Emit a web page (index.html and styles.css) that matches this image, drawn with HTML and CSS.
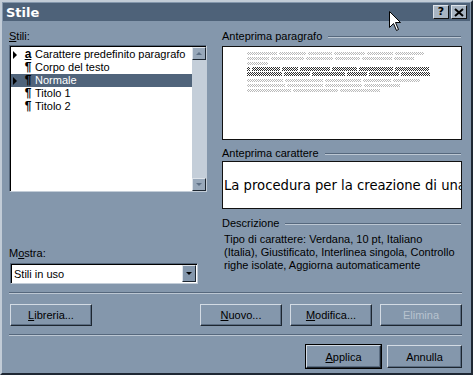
FILE: index.html
```html
<!DOCTYPE html>
<html>
<head>
    <title>Stile</title>
    <link rel="stylesheet" href="styles.css">
</head>
<body>
    <div class="window">
        <div class="titlebar">
            <span class="title">Stile</span>
            <div class="caption-buttons">
                <span class="cap-btn help">?</span>
                <span class="cap-btn">
                    <svg width="10" height="9" viewBox="0 0 10 9"><path d="M1 1 L9 8 M9 1 L1 8" stroke="#000" stroke-width="2"/></svg>
                </span>
            </div>
        </div>

        <div class="content">
            <div class="top">
                <div class="left">
                    <div class="label"><u>S</u>tili:</div>
                    <div class="listbox">
                        <div class="rows">
                            <div class="row"><span class="marker"></span><span class="glyph char">a</span>Carattere predefinito paragrafo</div>
                            <div class="row"><span class="marker none"></span><span class="glyph">¶</span>Corpo del testo</div>
                            <div class="row selected"><span class="marker"></span><span class="glyph">¶</span>Normale</div>
                            <div class="row"><span class="marker none"></span><span class="glyph">¶</span>Titolo 1</div>
                            <div class="row"><span class="marker none"></span><span class="glyph">¶</span>Titolo 2</div>
                        </div>
                        <div class="scrollbar">
                            <span class="sb-btn"><span class="arrow-up"></span></span>
                            <span class="sb-btn"><span class="arrow-down"></span></span>
                        </div>
                    </div>

                    <div class="label mostra">M<u>o</u>stra:</div>
                    <div class="select">
                        <span class="select-value">Stili in uso</span>
                        <span class="drop-btn"><span class="arrow-down dark"></span></span>
                    </div>
                </div>

                <div class="right">
                    <div class="group-title"><span>Anteprima paragrafo</span><i></i></div>
                    <div class="preview para">
                        <div class="pline light">
                            <b style="width:30px"></b><b style="width:27px"></b><b style="width:24px"></b><b style="width:31px"></b><b style="width:26px"></b><b style="width:29px"></b>
                        </div>
                        <div class="pline light">
                            <b style="width:22px"></b><b style="width:33px"></b><b style="width:27px"></b><b style="width:25px"></b><b style="width:30px"></b><b style="width:20px"></b>
                        </div>
                        <div class="pline light">
                            <b style="width:21px"></b>
                        </div>
                        <div class="pline dark first">
                            <b style="width:3px"></b><b style="width:28px"></b><b style="width:16px"></b><b style="width:30px"></b><b style="width:25px"></b><b style="width:34px"></b><b style="width:34px"></b>
                        </div>
                        <div class="pline dark">
                            <b style="width:35px"></b><b style="width:26px"></b><b style="width:33px"></b><b style="width:20px"></b><b style="width:30px"></b><b style="width:29px"></b>
                        </div>
                        <div class="pline light after">
                            <b style="width:36px"></b><b style="width:38px"></b><b style="width:36px"></b><b style="width:28px"></b><b style="width:27px"></b>
                        </div>
                        <div class="pline light">
                            <b style="width:38px"></b><b style="width:36px"></b><b style="width:37px"></b><b style="width:36px"></b>
                        </div>
                        <div class="pline light">
                            <b style="width:44px"></b><b style="width:45px"></b><b style="width:40px"></b>
                        </div>
                    </div>

                    <div class="group-title gap"><span>Anteprima carattere</span><i></i></div>
                    <div class="preview chars">
                        <span class="sample">La procedura per la creazione di una</span>
                    </div>

                    <div class="group-title desc-gap"><span>Descrizione</span><i></i></div>
                    <p class="description">
                        Tipo di carattere: Verdana, 10 pt, Italiano<br>
                        (Italia), Giustificato, Interlinea singola, Controllo<br>
                        righe isolate, Aggiorna automaticamente
                    </p>
                </div>
            </div>

            <div class="separator"></div>

            <div class="actions">
                <button class="btn"><u>L</u>ibreria...</button>
                <button class="btn push"><u>N</u>uovo...</button>
                <button class="btn"><u>M</u>odifica...</button>
                <button class="btn" disabled>Elimina</button>
            </div>

            <div class="separator"></div>

            <div class="footer">
                <button class="btn small default"><u>A</u>pplica</button>
                <button class="btn small">Annulla</button>
            </div>
        </div>

        <!-- mouse pointer -->
        <svg class="cursor" width="13" height="21" viewBox="0 0 13 21">
            <path d="M0.5 0.5 L0.5 16.5 L4.5 12.5 L7.5 19.5 L9.5 18.5 L6.5 11.5 L11.5 11.5 Z" fill="#fff" stroke="#000" stroke-width="1"/>
        </svg>
    </div>
</body>
</html>
```

FILE: styles.css
```css
/* Finestra di dialogo classica, tema grigio-blu */
body {
    margin: 0;
    font-family: 'Liberation Sans', Arial, sans-serif;
    font-size: 11px;
    color: #000;
}
.window {
    position: relative;
    width: 473px;
    height: 375px;
    box-sizing: border-box;
    background-color: #8497ac;
    border: 2px solid;
    border-color: #c2ccd7 #1f2833 #1f2833 #c2ccd7;
    display: flex;
    flex-direction: column;
}
.titlebar {
    height: 18px;
    margin: 1px 1px 0 1px;
    background-color: #4e6279;
    display: flex;
    align-items: center;
    justify-content: space-between;
    padding: 0 3px 0 3px;
}
.title {
    font-family: 'DejaVu Sans', sans-serif;
    font-weight: bold;
    font-size: 13px;
    color: #fff;
}
.caption-buttons {
    display: flex;
    gap: 2px;
}
.cap-btn {
    width: 14px;
    height: 12px;
    background-color: #a8b5c3;
    border: 1px solid;
    border-color: #dde3ea #111 #111 #dde3ea;
    display: flex;
    align-items: center;
    justify-content: center;
}
.cap-btn.help {
    font-family: 'DejaVu Sans', sans-serif;
    font-weight: bold;
    font-size: 11px;
    line-height: 12px;
}
.content {
    flex: 1;
    padding: 9px 9px 0 7px;
    display: flex;
    flex-direction: column;
}
.top {
    height: 254px;
    display: flex;
    gap: 15px;
}
.left {
    width: 198px;
    display: flex;
    flex-direction: column;
}
.label {
    height: 13px;
    line-height: 13px;
    margin-bottom: 2px;
}
.label.mostra {
    margin-top: auto;
    margin-bottom: 3px;
}

/* lista stili */
.listbox {
    height: 147px;
    box-sizing: border-box;
    background-color: #fff;
    border: 1px solid;
    border-color: #55677c #c3cdd8 #c3cdd8 #55677c;
    box-shadow: inset 1px 1px 0 #000;
    padding: 1px 0 0 1px;
    display: flex;
}
.rows {
    flex: 1;
    padding-top: 1px;
}
.row {
    height: 13px;
    line-height: 13px;
    display: flex;
    align-items: center;
    white-space: nowrap;
}
.row.selected {
    background-color: #50647b;
    color: #fff;
}
.marker {
    width: 0;
    height: 0;
    margin: 0 5px 0 2px;
    border-left: 4px solid #000;
    border-top: 4px solid transparent;
    border-bottom: 4px solid transparent;
}
.marker.none {
    border-left-color: transparent;
}
.glyph {
    width: 12px;
    margin-right: 1px;
    text-align: center;
    font-weight: bold;
    font-size: 12px;
}
.row.selected .glyph {
    color: #000;
}
.glyph.char {
    text-decoration: underline;
}
.scrollbar {
    width: 14px;
    background-color: #c4ced9;
    display: flex;
    flex-direction: column;
    justify-content: space-between;
}
.sb-btn {
    height: 11px;
    background-color: #98a8ba;
    border: 1px solid;
    border-color: #dde3ea #1d2630 #1d2630 #dde3ea;
    display: flex;
    align-items: center;
    justify-content: center;
}
.arrow-up, .arrow-down {
    width: 0;
    height: 0;
    border-left: 3px solid transparent;
    border-right: 3px solid transparent;
}
.arrow-up {
    border-bottom: 3px solid #5d6f84;
}
.arrow-down {
    border-top: 3px solid #5d6f84;
}
.arrow-down.dark {
    border-top-color: #000;
}

/* casella a discesa */
.select {
    width: 188px;
    height: 21px;
    box-sizing: border-box;
    margin-left: 1px;
    background-color: #fff;
    border: 1px solid;
    border-color: #55677c #c3cdd8 #c3cdd8 #55677c;
    box-shadow: inset 1px 1px 0 #000;
    padding: 1px 1px 1px 3px;
    display: flex;
    align-items: center;
}
.select-value {
    flex: 1;
}
.drop-btn {
    width: 12px;
    height: 15px;
    background-color: #8497ac;
    border: 1px solid;
    border-color: #dde3ea #1d2630 #1d2630 #dde3ea;
    display: flex;
    align-items: center;
    justify-content: center;
}

/* colonna destra */
.right {
    width: 240px;
    display: flex;
    flex-direction: column;
}
.group-title {
    height: 13px;
    line-height: 13px;
    display: flex;
    align-items: center;
    gap: 6px;
}
.group-title i {
    flex: 1;
    height: 1px;
    background-color: #56687d;
    border-bottom: 1px solid #bcc7d3;
    margin-right: 1px;
}
.group-title.gap {
    margin-top: 7px;
}
.group-title.desc-gap {
    margin-top: 8px;
}
.preview {
    background-color: #fff;
    border: 1px solid #111;
    box-sizing: border-box;
}
.preview.para {
    height: 94px;
    margin-top: 3px;
    padding: 5px 0 0 24px;
}
.pline {
    display: flex;
    gap: 2px;
    height: 3px;
    margin-bottom: 2px;
}
.pline b {
    display: block;
    height: 100%;
}
.pline.light b {
    background: repeating-conic-gradient(#b9b9b9 0 25%, #fff 0 50%) 0 0 / 2px 2px;
}
.pline.dark {
    height: 4px;
    margin-bottom: 1px;
}
.pline.dark b {
    background: repeating-conic-gradient(#2e2e2e 0 25%, #fff 0 50%) 0 0 / 2px 2px;
}
.pline.first {
    margin-top: 2px;
}
.pline.after {
    margin-top: 3px;
}
.preview.chars {
    height: 48px;
    margin-top: 1px;
    padding-left: 1px;
    display: flex;
    align-items: center;
    overflow: hidden;
    white-space: nowrap;
}
.sample {
    font-family: 'DejaVu Sans', Verdana, sans-serif;
    font-size: 13.2px;
}
.description {
    margin: 3px 0 0 2px;
    line-height: 13px;
}

/* pulsanti */
.separator {
    height: 1px;
    margin: 8px 0 0 0;
    background-color: #56687d;
    border-bottom: 1px solid #bcc7d3;
}
.actions {
    display: flex;
    gap: 8px;
    margin-top: 10px;
    padding-left: 1px;
}
.btn {
    width: 82px;
    height: 22px;
    box-sizing: border-box;
    background-color: #8497ac;
    font-family: 'Liberation Sans', Arial, sans-serif;
    font-size: 11px;
    color: #000;
    padding: 0;
    border: 1px solid;
    border-color: #d3dbe4 #1d2630 #1d2630 #d3dbe4;
    box-shadow: inset -1px -1px 0 #5b6d82;
}
.btn.push {
    margin-left: auto;
}
.btn:disabled {
    color: #b8c3cf;
}
.footer {
    display: flex;
    justify-content: flex-end;
    gap: 6px;
    margin-top: 9px;
}
.btn.small {
    width: 75px;
    height: 23px;
}
.btn.default {
    outline: 1px solid #000;
}
.cursor {
    position: absolute;
    left: 387px;
    top: 9px;
}
```
